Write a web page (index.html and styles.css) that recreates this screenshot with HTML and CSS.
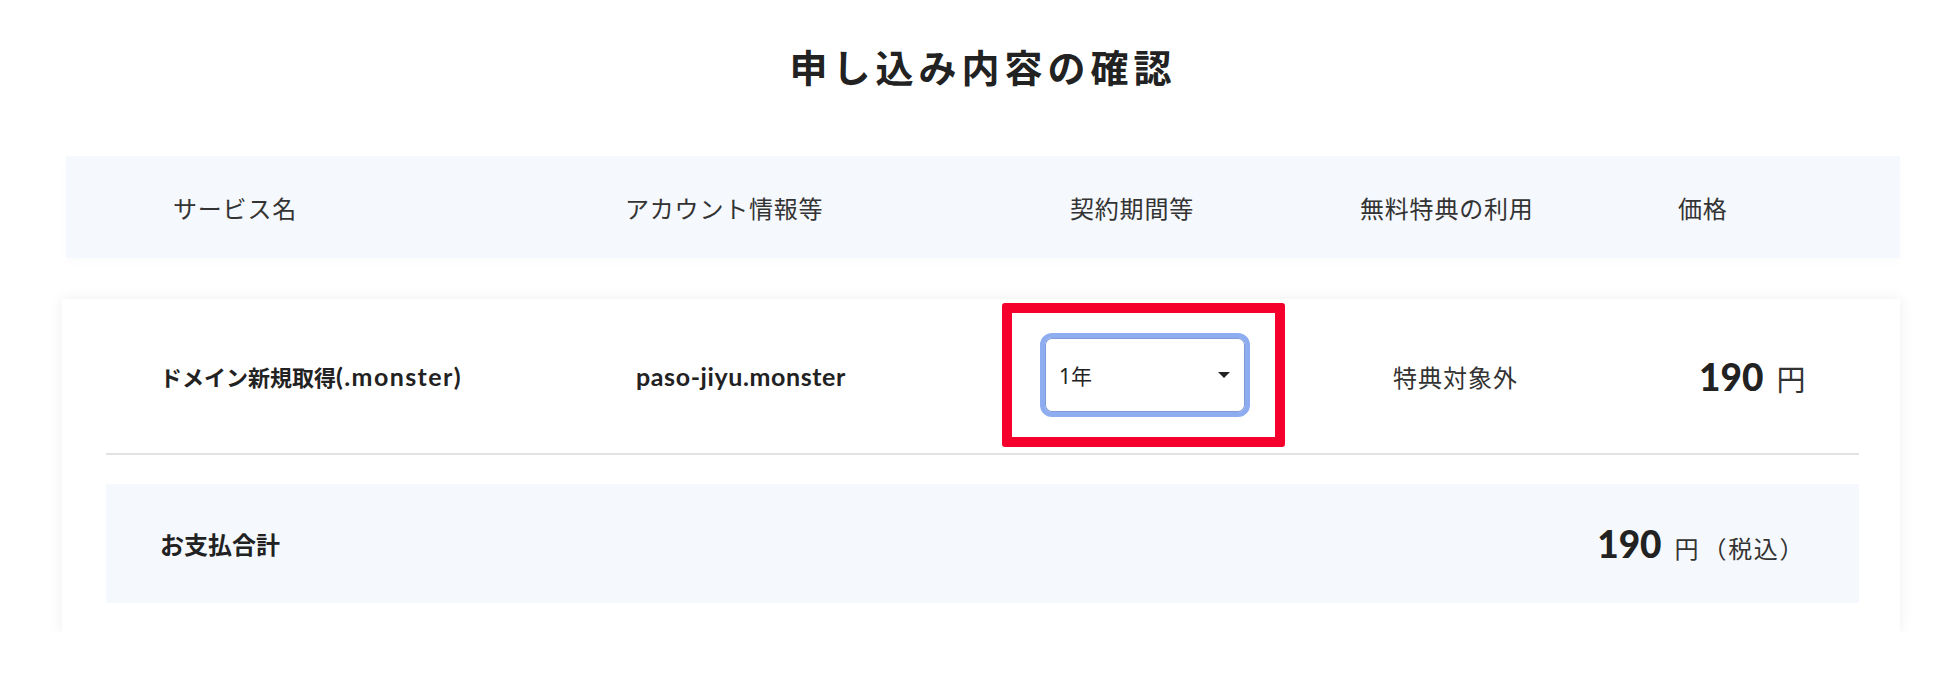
FILE: index.html
```html
<!DOCTYPE html>
<html lang="ja">
<head>
<meta charset="utf-8">
<title>申し込み内容の確認</title>
<link rel="stylesheet" href="styles.css">
</head>
<body>
<main class="page">
  <h1 class="title">申し込み内容の確認</h1>
  <div class="thead">
    <div class="th">サービス名</div>
    <div class="th">アカウント情報等</div>
    <div class="th">契約期間等</div>
    <div class="th">無料特典の利用</div>
    <div class="th">価格</div>
  </div>
  <section class="card">
    <div class="row">
      <div class="cell name">ドメイン新規取得<span class="latin">(.monster)</span></div>
      <div class="cell account latin">paso-jiyu.monster</div>
      <div class="cell">
        <div class="highlight">
          <div class="select">
            <span class="select-value"><span class="latin-reg">1</span>年</span>
            <span class="caret"></span>
          </div>
        </div>
      </div>
      <div class="cell benefit">特典対象外</div>
      <div class="cell price"><span class="num">190</span><span class="yen big">円</span></div>
    </div>
    <div class="total">
      <div class="total-label">お支払合計</div>
      <div class="price"><span class="num">190</span><span class="yen">円</span><span class="tax">（税込）</span></div>
    </div>
  </section>
</main>
</body>
</html>
```
FILE: styles.css
```css
* { box-sizing: border-box; }
html, body { margin: 0; padding: 0; background: #fff; }
body {
  font-family: "Noto Sans CJK JP", "Noto Sans", sans-serif;
  color: #333;
  font-size: 24px;
}
.page {
  width: 1838px;
  margin-left: 62px;
  padding-top: 40px;
}
.title {
  margin: 0;
  text-align: center;
  font-size: 38px;
  line-height: 52px;
  font-weight: 700;
  letter-spacing: 5px;
  color: #222;
  padding-left: 4px;
}
.thead {
  margin-top: 64px;
  margin-left: 4px;
  height: 102px;
  background: #f5f8fc;
  display: grid;
  grid-template-columns: 452px 445px 290px 318px 1fr;
  align-items: center;
  padding-left: 107px;
  box-shadow: 0 6px 10px rgba(0, 0, 0, 0.015);
}
.th {
  font-size: 24px;
  font-weight: 400;
  color: #333;
  white-space: nowrap;
  letter-spacing: 0.8px;
}
.card {
  margin-top: 41px;
  background: #fff;
  box-shadow: 0 0 14px rgba(0, 0, 0, 0.07);
  padding: 0 41px 29px 44px;
}
.row {
  display: grid;
  grid-template-columns: 476px 366px 391px 306px 1fr;
  align-items: center;
  height: 156px;
  padding-left: 54px;
  border-bottom: 2px solid #e2e2e2;
}
.cell { white-space: nowrap; }
.name {
  font-size: 22px;
  font-weight: 700;
  color: #222;
}
.latin {
  font-family: "Lato", "Noto Sans", sans-serif;
  font-weight: 700;
}
.name .latin { font-size: 25px; letter-spacing: 1.4px; }
.account {
  font-size: 25px;
  letter-spacing: 0.6px;
  color: #222;
}
.highlight {
  width: 283px;
  height: 144px;
  border: 10px solid #f5002d;
  border-radius: 3px;
  padding: 20px 25px 20px 28px;
  margin-top: -2px;
}
.select {
  width: 210px;
  height: 84px;
  border: 5px solid #8eadf0;
  border-radius: 12px;
  display: flex;
  align-items: center;
  justify-content: space-between;
  padding: 0 15px 0 14px;
  background: #fff;
  box-shadow: inset 0 0 0 1px #7f9ad6;
}
.select-value {
  font-size: 21px;
  color: #222;
}
.latin-reg {
  font-family: "Noto Sans", sans-serif;
}
.caret {
  width: 0;
  height: 0;
  border-left: 6px solid transparent;
  border-right: 6px solid transparent;
  border-top: 6px solid #222;
}
.benefit { letter-spacing: 1px; }
.price {
  display: flex;
  align-items: baseline;
  white-space: nowrap;
}
.num {
  font-family: "Lato", "Noto Sans", sans-serif;
  font-weight: 900;
  font-size: 37px;
  color: #222;
}
.yen {
  font-size: 24px;
  margin-left: 13px;
  color: #333;
}
.yen.big {
  font-size: 29px;
  margin-left: 13px;
}
.tax {
  font-size: 24px;
  color: #333;
  margin-left: 4px;
  letter-spacing: 1.6px;
}
.total {
  margin-top: 29px;
  height: 119px;
  background: #f5f8fc;
  display: flex;
  align-items: center;
  justify-content: space-between;
  padding: 0 54px 0 54px;
}
.total-label {
  font-size: 24px;
  font-weight: 700;
  color: #222;
}
```
